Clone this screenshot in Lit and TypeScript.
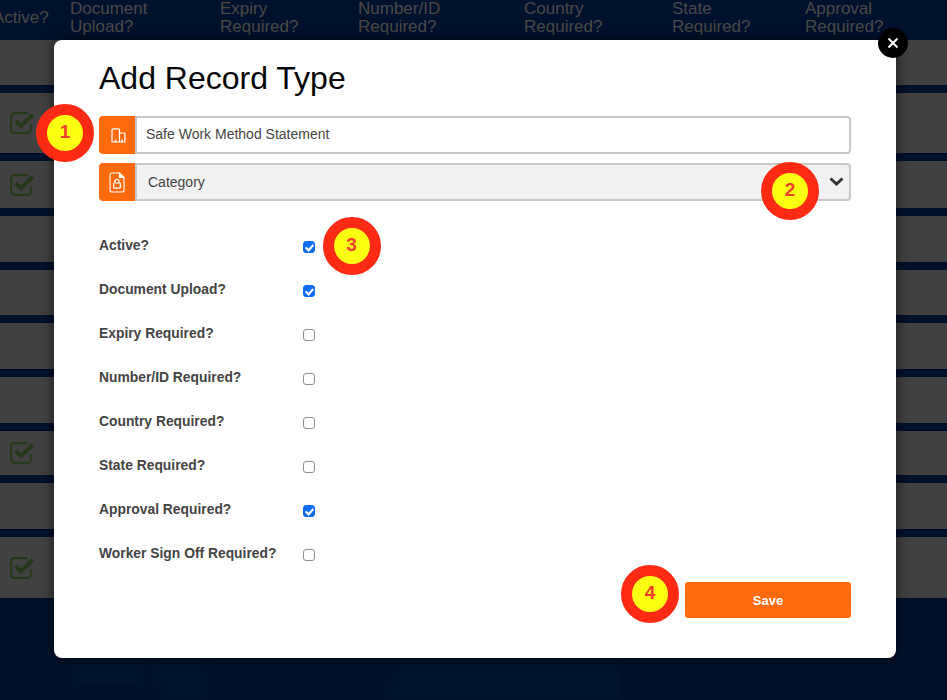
import { LitElement, html, css, svg } from "lit";
import { customElement } from "lit/decorators.js";

const HEAD = [
  ["Active?"],
  ["Document", "Upload?"],
  ["Expiry", "Required?"],
  ["Number/ID", "Required?"],
  ["Country", "Required?"],
  ["State", "Required?"],
  ["Approval", "Required?"],
];
const ROWS: [number, boolean][] = [
  [45, false], [60.5, true], [47.5, true], [46.5, false], [45.5, false],
  [46.5, false], [46.5, false], [44.5, true], [46.5, false], [61.5, true],
];
const FIELDS: [string, boolean][] = [
  ["Active?", true], ["Document Upload?", true], ["Expiry Required?", false],
  ["Number/ID Required?", false], ["Country Required?", false], ["State Required?", false],
  ["Approval Required?", true], ["Worker Sign Off Required?", false],
];
const BADGES: [string, string][] = [["1", "b1"], ["2", "b2"], ["3", "b3"], ["4", "b4"]];

const tick = svg`<svg class="tick" viewBox="0 0 26 24" width="27" height="25" fill="none">
  <path d="M21 13.5V19a3 3 0 0 1-3 3H5a3 3 0 0 1-3-3V6a3 3 0 0 1 3-3h13" stroke="#26381a" stroke-width="2"/>
  <path d="M6.5 10.5l5 5L23 4.5" stroke="#26381a" stroke-width="4"/></svg>`;

@customElement("app-root")
export class AppRoot extends LitElement {
  static styles = css`
    :host { display: block; position: relative; width: 947px; height: 700px; overflow: hidden;
      background: #00102b; font-family: "Liberation Sans", Arial, sans-serif; }
    .head { height: 40px; overflow: hidden; display: grid; align-items: end; margin-left: -7px;
      grid-template-columns: 77px 150px 138px 166px 148px 133px 120px;
      font-size: 17px; line-height: 17.5px; color: #4a4a48; background: #00112c; padding-bottom: 11px; box-sizing: border-box; }
    .head .only { padding-bottom: 9px; }
    .rows { display: flex; flex-direction: column; gap: 7.5px; }
    .row { background: #414141; display: flex; align-items: center; padding-left: 9px; }
    .tick { display: block; }
    .pattern { position: absolute; left: 0; top: 598px; filter: blur(3px); }
    .modal { position: absolute; left: 54px; top: 40px; width: 842px; height: 618px; box-sizing: border-box;
      padding: 20px 45px 0; background: #fff; border-radius: 8px; box-shadow: 0 0 14px rgba(0,0,0,.65); }
    h1 { margin: 0 0 19px; font-size: 32px; line-height: 37px; font-weight: 400; color: #050505; }
    .group { display: flex; height: 38px; margin-bottom: 9px; position: relative; }
    .addon { width: 36px; background: #ff6a0d; border-radius: 4px 0 0 4px; display: flex; align-items: center; justify-content: center; flex: none; }
    .addon .bld { margin-left: 2px; }
    .ctl { flex: 1; min-width: 0; box-sizing: border-box; border: 2px solid #c9c9c3; border-radius: 0 4px 4px 0;
      font: 14px "Liberation Sans", Arial, sans-serif; color: #444; outline: none; margin: 0; }
    input.ctl { padding: 0 0 2px 9px; background: #fff; }
    select.ctl { appearance: none; padding: 0 0 0 11px; background: #f2f2f2; }
    .chev { position: absolute; right: 7px; top: 14px; pointer-events: none; }
    .fields { display: grid; grid-template-columns: 204px 12px; grid-auto-rows: 44px; margin-top: 25px; }
    .label { font-size: 13.85px; font-weight: 700; color: #444; line-height: 38px; }
    .fields input { appearance: none; width: 12px; height: 12px; margin: 15px 0 0 -.5px; box-sizing: border-box; position: relative;
      border: 1px solid #8f8f8f; border-radius: 3px; background: #fff; }
    .fields input:checked { background: #0f6cf5; border-color: #0f6cf5; }
    .fields input:checked::after { content: ""; position: absolute; left: 3px; top: .5px; width: 3px; height: 6px;
      border: solid #fff; border-width: 0 2px 2px 0; transform: rotate(42deg); }
    .foot { display: flex; justify-content: flex-end; margin-top: 4px; }
    .save { width: 166px; height: 36px; border: 0; border-radius: 3px;
      background: #ff6a0d; color: #fff; font: 700 13px "Liberation Sans", Arial, sans-serif; padding: 0; }
    .close { position: absolute; left: 878px; top: 28px; width: 30px; height: 30px; border-radius: 50%; border: 0; padding: 0;
      background: #000; display: flex; align-items: center; justify-content: center; }
    .badge { position: absolute; box-sizing: content-box; width: 36px; height: 36px; border: 11px solid #ff2a14; border-radius: 50%;
      background: #ffff14; color: #f0402c; font-size: 19px; font-weight: 700; line-height: 34px; text-align: center; }
    .b1 { left: 36px; top: 104px; }
    .b2 { left: 761px; top: 161.5px; }
    .b3 { left: 322.5px; top: 216.5px; }
    .b4 { left: 621px; top: 565px; }
  `;

  render() {
    return html`
      <div class="head">${HEAD.map((h) => html`<div class=${h.length === 1 ? "only" : ""}>${h.map((l, i) => html`${i ? html`<br />` : ""}${l}`)}</div>`)}</div>
      <div class="rows">
        ${ROWS.map(([h, c]) => html`<div class="row" style="height:${h}px">${c ? tick : ""}</div>`)}
      </div>
      <svg class="pattern" width="947" height="102" fill="#02132d">
        <path d="M72 62h72v24H72zM150 62h55v40h-40zM400 62h220v40H385z"/>
      </svg>
      <div class="modal">
        <h1>Add Record Type</h1>
        <div class="group">
          <span class="addon">
            <svg class="bld" width="15" height="15" viewBox="0 0 15 15" fill="none" stroke="#fff" stroke-width="1.2">
              <path d="M1 14V1.8A1 1 0 0 1 2 .8h5.5a1 1 0 0 1 1 1V14zM8.5 5h4.4a1 1 0 0 1 1 1v8H8.5"/>
              <path d="M4.5 14v-2.6M11.2 14v-2.6" stroke-width="1.5"/>
            </svg>
          </span>
          <input class="ctl" .value=${"Safe Work Method Statement"} />
        </div>
        <div class="group">
          <span class="addon">
            <svg width="16" height="21" viewBox="0 0 16 21" fill="none" stroke="#fff" stroke-width="1.1">
              <path d="M10.5 1H3a2 2 0 0 0-2 2v15a2 2 0 0 0 2 2h10a2 2 0 0 0 2-2V5.5z"/>
              <path d="M10.5 1v4.5H15" fill="#fff"/>
              <rect x="4.7" y="11" width="6.6" height="5.2" rx=".8" stroke-width="1.2"/>
              <path d="M6 11V9.4a2 2 0 0 1 4 0V11" stroke-width="1.2"/>
            </svg>
          </span>
          <select class="ctl"><option>Category</option></select>
          <svg class="chev" width="15" height="9" viewBox="0 0 15 9" fill="none" stroke="#333" stroke-width="3">
            <path d="M1.5 1.5l6 5.5 6-5.5"/>
          </svg>
        </div>
        <div class="fields">
          ${FIELDS.map(([l, c]) => html`<div class="label">${l}</div><input type="checkbox" .checked=${c} />`)}
        </div>
        <div class="foot"><button class="save">Save</button></div>
      </div>
      <button class="close" aria-label="Close">
        <svg width="12" height="12" viewBox="0 0 12 12" stroke="#fff" stroke-width="2"><path d="M1.5 1.5l9 9M10.5 1.5l-9 9"/></svg>
      </button>
      ${BADGES.map(([n, c]) => html`<div class="badge ${c}">${n}</div>`)}
    `;
  }
}
